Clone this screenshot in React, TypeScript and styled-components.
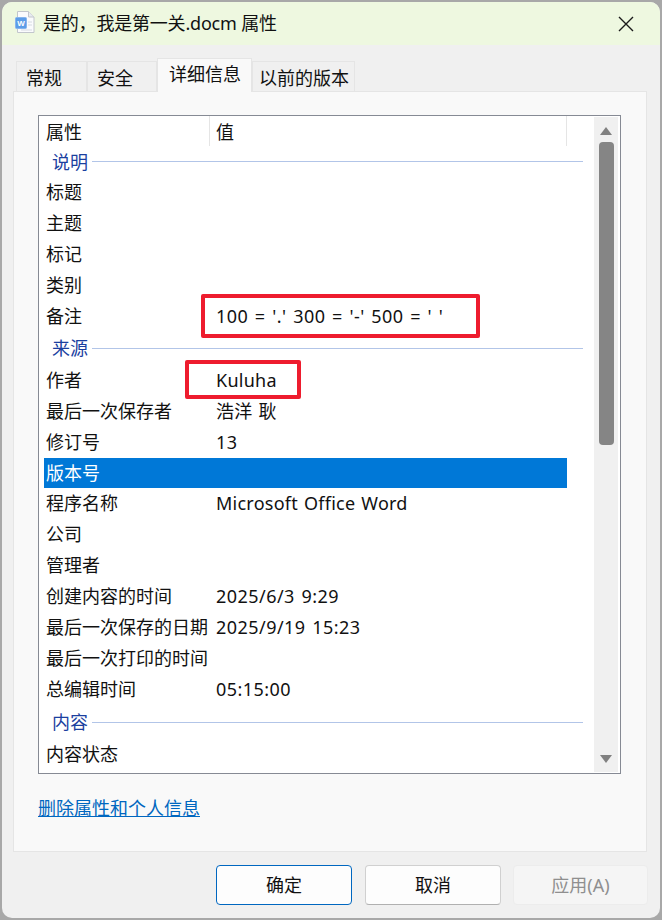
import React from "react";
import styled, { createGlobalStyle } from "styled-components";

const FONT = `"Noto Sans", "Noto Sans CJK SC", sans-serif`;

const GlobalStyle = createGlobalStyle`
  html, body {
    margin: 0;
    padding: 0;
    background: #a8a8a8;
    font-family: ${FONT};
  }
`;

const Page = styled.div`
  width: 662px;
  height: 920px;
  padding: 2px;
  box-sizing: border-box;
`;

const Window = styled.div`
  width: 658px;
  height: 916px;
  border-radius: 10px;
  overflow: hidden;
  background: #f0f0f0;
  display: flex;
  flex-direction: column;
`;

const TitleBar = styled.div`
  height: 43px;
  flex: none;
  background: #eef8e0;
  display: flex;
  align-items: center;
  padding: 0 13px;
  gap: 8px;
`;

const TitleText = styled.div`
  flex: 1;
  font-size: 18px;
  color: #111;
  line-height: 43px;
  letter-spacing: -0.2px;
`;

const CloseButton = styled.div`
  width: 18px;
  height: 18px;
  margin-right: 12px;
  display: flex;
`;

const TabBar = styled.div`
  height: 46px;
  flex: none;
  padding: 12px 0 0 14px;
  box-sizing: border-box;
  display: flex;
  align-items: flex-end;
`;

const Tab = styled.div<{ $active?: boolean; $width: number; $inset: number }>`
  width: ${(p) => p.$width}px;
  height: ${(p) => (p.$active ? 34 : 30)}px;
  margin-bottom: ${(p) => (p.$active ? -1 : 0)}px;
  padding-left: ${(p) => p.$inset}px;
  box-sizing: border-box;
  border: 1px solid #e5e5e5;
  border-bottom: none;
  background: ${(p) => (p.$active ? "#f9f9f9" : "#f0f0f0")};
  position: relative;
  z-index: ${(p) => (p.$active ? 1 : 0)};
  font-size: 18px;
  line-height: ${(p) => (p.$active ? 30 : 33)}px;
  white-space: nowrap;
  color: #111;
`;

const Panel = styled.div`
  margin: 0 13px 0 11px;
  height: 761px;
  flex: none;
  box-sizing: border-box;
  background: #f9f9f9;
  border: 1px solid #e5e5e5;
  padding: 23px 25px 0 24px;
`;

const ListBox = styled.div`
  height: 659px;
  box-sizing: border-box;
  background: #fff;
  border: 1px solid #868a94;
  position: relative;
  display: flex;
  overflow: hidden;
`;

const ListBody = styled.div`
  width: 555px;
  flex: none;
  display: flex;
  flex-direction: column;
`;

const HeaderRow = styled.div`
  height: 30px;
  flex: none;
  display: flex;
  font-size: 18px;
  line-height: 32px;
  color: #111;
`;

const HeaderCell = styled.div<{ $width: number }>`
  width: ${(p) => p.$width}px;
  flex: none;
  box-sizing: border-box;
  padding-left: ${(p) => (p.$width > 200 ? 6 : 7)}px;
  border-right: 1px solid #e5e5e5;
`;

const GroupRow = styled.div<{ $height: number }>`
  height: ${(p) => p.$height}px;
  flex: none;
  display: flex;
  align-items: center;
  padding-left: 13px;
  gap: 4px;
  margin-right: 11px;
`;

const GroupLabel = styled.div`
  font-size: 18px;
  line-height: 24px;
  color: #1b3f9f;
`;

const GroupLine = styled.div`
  flex: 1;
  height: 1px;
  background: #b2c5e8;
`;

const Row = styled.div<{ $selected?: boolean }>`
  height: 30.95px;
  flex: none;
  display: flex;
  margin-left: 5px;
  width: 523px;
  background: ${(p) => (p.$selected ? "#0078d7" : "transparent")};
  color: ${(p) => (p.$selected ? "#fff" : "#111")};
  font-size: 18px;
  line-height: 31px;
  white-space: nowrap;
`;

const RowName = styled.div`
  width: 172px;
  flex: none;
  padding-left: 2px;
  box-sizing: border-box;
`;

const RowValue = styled.div<{ $numeric: boolean }>`
  flex: 1;
  letter-spacing: ${(p) => (p.$numeric ? 0.45 : 0.25)}px;
  word-spacing: ${(p) => (p.$numeric ? 1.5 : 1)}px;
`;

const ScrollBar = styled.div`
  position: absolute;
  top: 1px;
  right: 2px;
  bottom: 1px;
  width: 24px;
  background: #f0f0f0;
  display: flex;
  flex-direction: column;
  align-items: center;
`;

const ScrollArrow = styled.div<{ $down?: boolean }>`
  width: 0;
  height: 0;
  flex: none;
  border-left: 6px solid transparent;
  border-right: 6px solid transparent;
  ${(p) =>
    p.$down
      ? `border-top: 8px solid #808080; margin-top: 310px;`
      : `border-bottom: 8px solid #808080; margin-top: 10px;`}
`;

const ScrollThumb = styled.div`
  width: 15px;
  height: 303px;
  flex: none;
  margin-top: 7px;
  background: #858585;
  border-radius: 4px;
`;

const Callout = styled.div<{ $left: number; $top: number; $width: number; $height: number }>`
  position: absolute;
  left: ${(p) => p.$left}px;
  top: ${(p) => p.$top}px;
  width: ${(p) => p.$width}px;
  height: ${(p) => p.$height}px;
  box-sizing: border-box;
  border: 4px solid #ee1c2e;
  border-radius: 2px;
`;

const RemoveLink = styled.a`
  display: inline-block;
  margin-top: 22px;
  font-size: 18px;
  line-height: 24px;
  color: #0067c0;
  text-decoration: underline;
`;

const Footer = styled.div`
  flex: 1;
  display: flex;
  justify-content: flex-end;
  gap: 12px;
  padding: 13px 12px 0 0;
`;

const DialogButton = styled.div<{ $variant?: "primary" | "disabled" }>`
  width: ${(p) => (p.$variant === "disabled" ? 135 : 136)}px;
  height: 40px;
  margin-right: ${(p) => (p.$variant === "primary" ? 1 : 0)}px;
  box-sizing: border-box;
  border-radius: 4px;
  font-size: 18px;
  line-height: 38px;
  text-align: center;
  background: ${(p) => (p.$variant === "disabled" ? "#f5f5f5" : "#fdfdfd")};
  color: ${(p) => (p.$variant === "disabled" ? "#8f8f8f" : "#111")};
  border: 1px solid
    ${(p) =>
      p.$variant === "primary"
        ? "#0067c0"
        : p.$variant === "disabled"
        ? "#ececec"
        : "#d0d0d0"};
  ${(p) => (!p.$variant ? "border-bottom-color: #b0b0b0;" : "")}
`;

const IconSvg = styled.svg`
  flex: none;
  margin-top: -2px;
`;

const WordIcon = () => (
  <IconSvg width="20" height="23" viewBox="0 0 20 23">
    <path d="M2.5 0.5H13.5L19 6V21.5H2.5Z" fill="#fafbfd" stroke="#c2c6cc" />
    <path d="M13.5 0.5V6H19" fill="#e8ebf0" stroke="#c2c6cc" />
    <path d="M13 11H17M13 14H17M6 19H17" stroke="#d5dae2" />
    <rect x="0.5" y="6.5" width="11" height="11" rx="1" fill="#5c9de8" stroke="#86b5ee" />
    <text x="6" y="15" textAnchor="middle" fontSize="8" fontWeight="700" fill="#fff" fontFamily="Liberation Sans, sans-serif">
      W
    </text>
  </IconSvg>
);

const CloseIcon = () => (
  <svg width="18" height="18" viewBox="0 0 18 18">
    <path d="M2 2L16 16M16 2L2 16" stroke="#1a1a1a" strokeWidth="1.4" fill="none" />
  </svg>
);

type Item =
  | { group: string; height: number }
  | { name: string; value?: string; selected?: boolean };

const ITEMS: Item[] = [
  { group: "说明", height: 31 },
  { name: "标题" },
  { name: "主题" },
  { name: "标记" },
  { name: "类别" },
  { name: "备注", value: "100 = '.' 300 = '-' 500 = ' '" },
  { group: "来源", height: 33 },
  { name: "作者", value: "Kuluha" },
  { name: "最后一次保存者", value: "浩洋 耿" },
  { name: "修订号", value: "13" },
  { name: "版本号", selected: true },
  { name: "程序名称", value: "Microsoft Office Word" },
  { name: "公司" },
  { name: "管理者" },
  { name: "创建内容的时间", value: "2025/6/3 9:29" },
  { name: "最后一次保存的日期", value: "2025/9/19 15:23" },
  { name: "最后一次打印的时间" },
  { name: "总编辑时间", value: "05:15:00" },
  { group: "内容", height: 34 },
  { name: "内容状态" },
];

export default function App() {
  return (
    <Page>
      <GlobalStyle />
      <Window>
        <TitleBar>
          <WordIcon />
          <TitleText>是的，我是第一关.docm 属性</TitleText>
          <CloseButton>
            <CloseIcon />
          </CloseButton>
        </TitleBar>
        <TabBar>
          <Tab $width={71} $inset={9}>常规</Tab>
          <Tab $width={70} $inset={9}>安全</Tab>
          <Tab $width={95} $inset={11} $active>
            详细信息
          </Tab>
          <Tab $width={103} $inset={6}>以前的版本</Tab>
        </TabBar>
        <Panel>
          <ListBox>
            <ListBody>
              <HeaderRow>
                <HeaderCell $width={171}>属性</HeaderCell>
                <HeaderCell $width={357}>值</HeaderCell>
              </HeaderRow>
              {ITEMS.map((item) =>
                "group" in item ? (
                  <GroupRow key={item.group} $height={item.height}>
                    <GroupLabel>{item.group}</GroupLabel>
                    <GroupLine />
                  </GroupRow>
                ) : (
                  <Row key={item.name} $selected={item.selected}>
                    <RowName>{item.name}</RowName>
                    <RowValue $numeric={/^\d/.test(item.value ?? "")}>{item.value}</RowValue>
                  </Row>
                )
              )}
            </ListBody>
            <ScrollBar>
              <ScrollArrow />
              <ScrollThumb />
              <ScrollArrow $down />
            </ScrollBar>
            <Callout $left={162} $top={178} $width={279} $height={44} />
            <Callout $left={146} $top={244} $width={116} $height={39} />
          </ListBox>
          <RemoveLink>删除属性和个人信息</RemoveLink>
        </Panel>
        <Footer>
          <DialogButton $variant="primary">确定</DialogButton>
          <DialogButton>取消</DialogButton>
          <DialogButton $variant="disabled">应用(A)</DialogButton>
        </Footer>
      </Window>
    </Page>
  );
}
